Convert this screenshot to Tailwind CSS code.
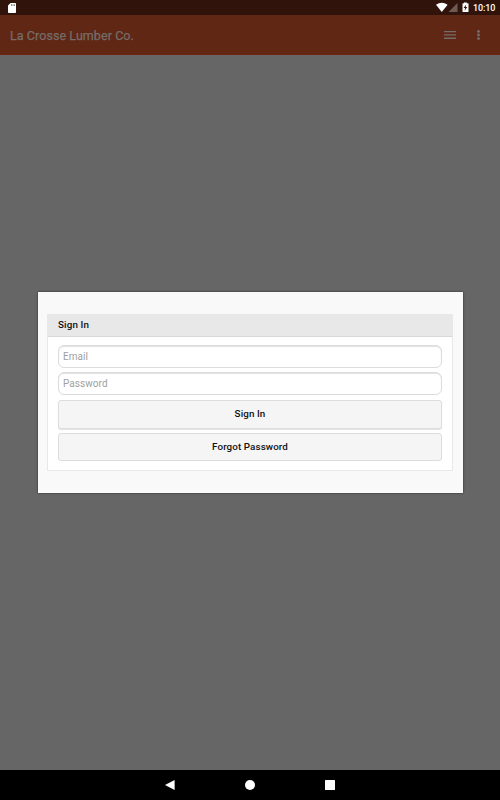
<!DOCTYPE html>
<html lang="en">

<head>
    <meta charset="UTF-8"/>
    <meta content="width=device-width, initial-scale=1.0" name="viewport"/>
    <script src="https://cdn.jsdelivr.net/npm/@tailwindcss/browser@4"></script>
    <title>Sign In - La Crosse Lumber Co.</title>
</head>

<body class="h-[800px] flex flex-col overflow-hidden bg-[#666666] font-['Roboto',sans-serif]">
<!-- status bar -->
<div class="h-[15px] shrink-0 flex items-center justify-between bg-[#30140b] pl-2 pr-[5px] text-white">
    <svg class="w-2 h-[10px]" viewBox="0 0 8 10" fill="currentColor">
        <path d="M2.6 0H7.2Q8 0 8 .8V9.2Q8 10 7.2 10H.8Q0 10 0 9.2V2.6Z"/>
        <path d="M3 1.3h.9v1.6H3zM4.6 1.3h.9v1.6h-.9zM6.1 1.3H7v1.6h-.9z" fill="#777"/>
    </svg>
    <div class="flex items-center">
        <svg class="w-[60px] h-[15px] -mr-[23px]" viewBox="0 0 60 15" fill="currentColor">
            <path d="M0 4.7Q5.8 .9 11.6 4.7L5.8 12Z"/>
            <path d="M21.5 3V12H12.5Z" fill="#6e5b54"/>
            <path d="M28 3.2V2.6h2.8v.6H32q.5 0 .5.5v7.8q0 .5-.5.5h-5q-.5 0-.5-.5V3.7q0-.5.5-.5Z"/>
            <path d="M30.2 4.4 27.6 8h1.5l-.5 2.8L31.3 7.100H29.800Z" fill="#30140b"/>
        </svg>
        <span class="w-[22px] pt-px text-[9px] leading-[15px] font-medium tracking-[-0.1px]">10:10</span>
    </div>
</div>

<header class="h-10 shrink-0 flex items-center justify-between bg-[#602715] border-b border-[#6e240e] pt-px pl-[10px] pr-5 text-[#746d6a]">
    <h1 class="pt-[2px] text-[12.5px] font-normal tracking-[0.07px] [-webkit-text-stroke:0.25px_currentColor]">La Crosse Lumber Co.</h1>
    <div class="flex items-center gap-[21px]">
        <svg class="w-3 h-2" viewBox="0 0 12 8" fill="currentColor">
            <path d="M0 0h12v1.3H0zM0 3.3h12v1.3H0zM0 6.6h12v1.3H0z"/>
        </svg>
        <svg class="w-[3px] h-[10px]" viewBox="0 0 3 10" fill="currentColor">
            <circle cx="1.5" cy="1.4" r="1.4"/>
            <circle cx="1.5" cy="5" r="1.4"/>
            <circle cx="1.5" cy="8.6" r="1.4"/>
        </svg>
    </div>
</header>

<main class="flex-1 pt-[237px]">
    <!-- sign in dialog -->
    <div class="w-[425px] h-[201px] mx-auto bg-[#f9f9f9] px-[9.5px] pt-[22px] shadow-[0_0_2px_rgba(0,0,0,0.6)]">
        <form class="h-[157px] bg-white border border-[#e8e8e8]">
            <h2 class="h-[22px] px-[10px] bg-[#e8e8e8] border-b border-[#d8d8d8] text-[9.8px] leading-[20px] font-medium tracking-[0.15px] text-[#111]">Sign In</h2>
            <div class="px-[10px] pt-2">
                <input class="block w-full h-[23px] px-1 mb-1 rounded-[6px] bg-white border border-[#dcdcdc] shadow-[inset_0_1px_1px_rgba(0,0,0,0.12)] text-[10px] tracking-[0.05px] placeholder:text-[#a0a0a0]" placeholder="Email" type="email"/>
                <input class="block w-full h-[23px] px-1 mb-[5px] rounded-[6px] bg-white border border-[#dcdcdc] shadow-[inset_0_1px_1px_rgba(0,0,0,0.12)] text-[10px] tracking-[0.05px] placeholder:text-[#a0a0a0]" placeholder="Password" type="password"/>
                <button class="block w-full h-[29px] mb-1 rounded-[3px] bg-[#f5f5f5] border border-[#dddddd] shadow-[0_1px_1px_rgba(0,0,0,0.12)] text-[9.8px] font-medium tracking-[0.1px] text-[#111]" type="button">Sign In</button>
                <button class="block w-full h-7 rounded-[3px] bg-[#f5f5f5] border border-[#dddddd] text-[9.8px] font-medium tracking-[0.1px] text-[#111]" type="button">Forgot Password</button>
            </div>
        </form>
    </div>
</main>

<!-- navigation bar -->
<nav class="h-[30px] shrink-0 flex items-center justify-center gap-[70px] bg-black text-white">
    <svg class="w-[10px] h-[10px]" viewBox="0 0 10 10" fill="currentColor">
        <path d="M0 5 9.6 0V10Z"/>
    </svg>
    <svg class="w-[10px] h-[10px]" viewBox="0 0 10 10" fill="currentColor">
        <circle cx="5" cy="5" r="5"/>
    </svg>
    <svg class="w-[10px] h-[10px]" viewBox="0 0 10 10" fill="currentColor">
        <rect width="10" height="10" rx=".6"/>
    </svg>
</nav>
</body>

</html>
